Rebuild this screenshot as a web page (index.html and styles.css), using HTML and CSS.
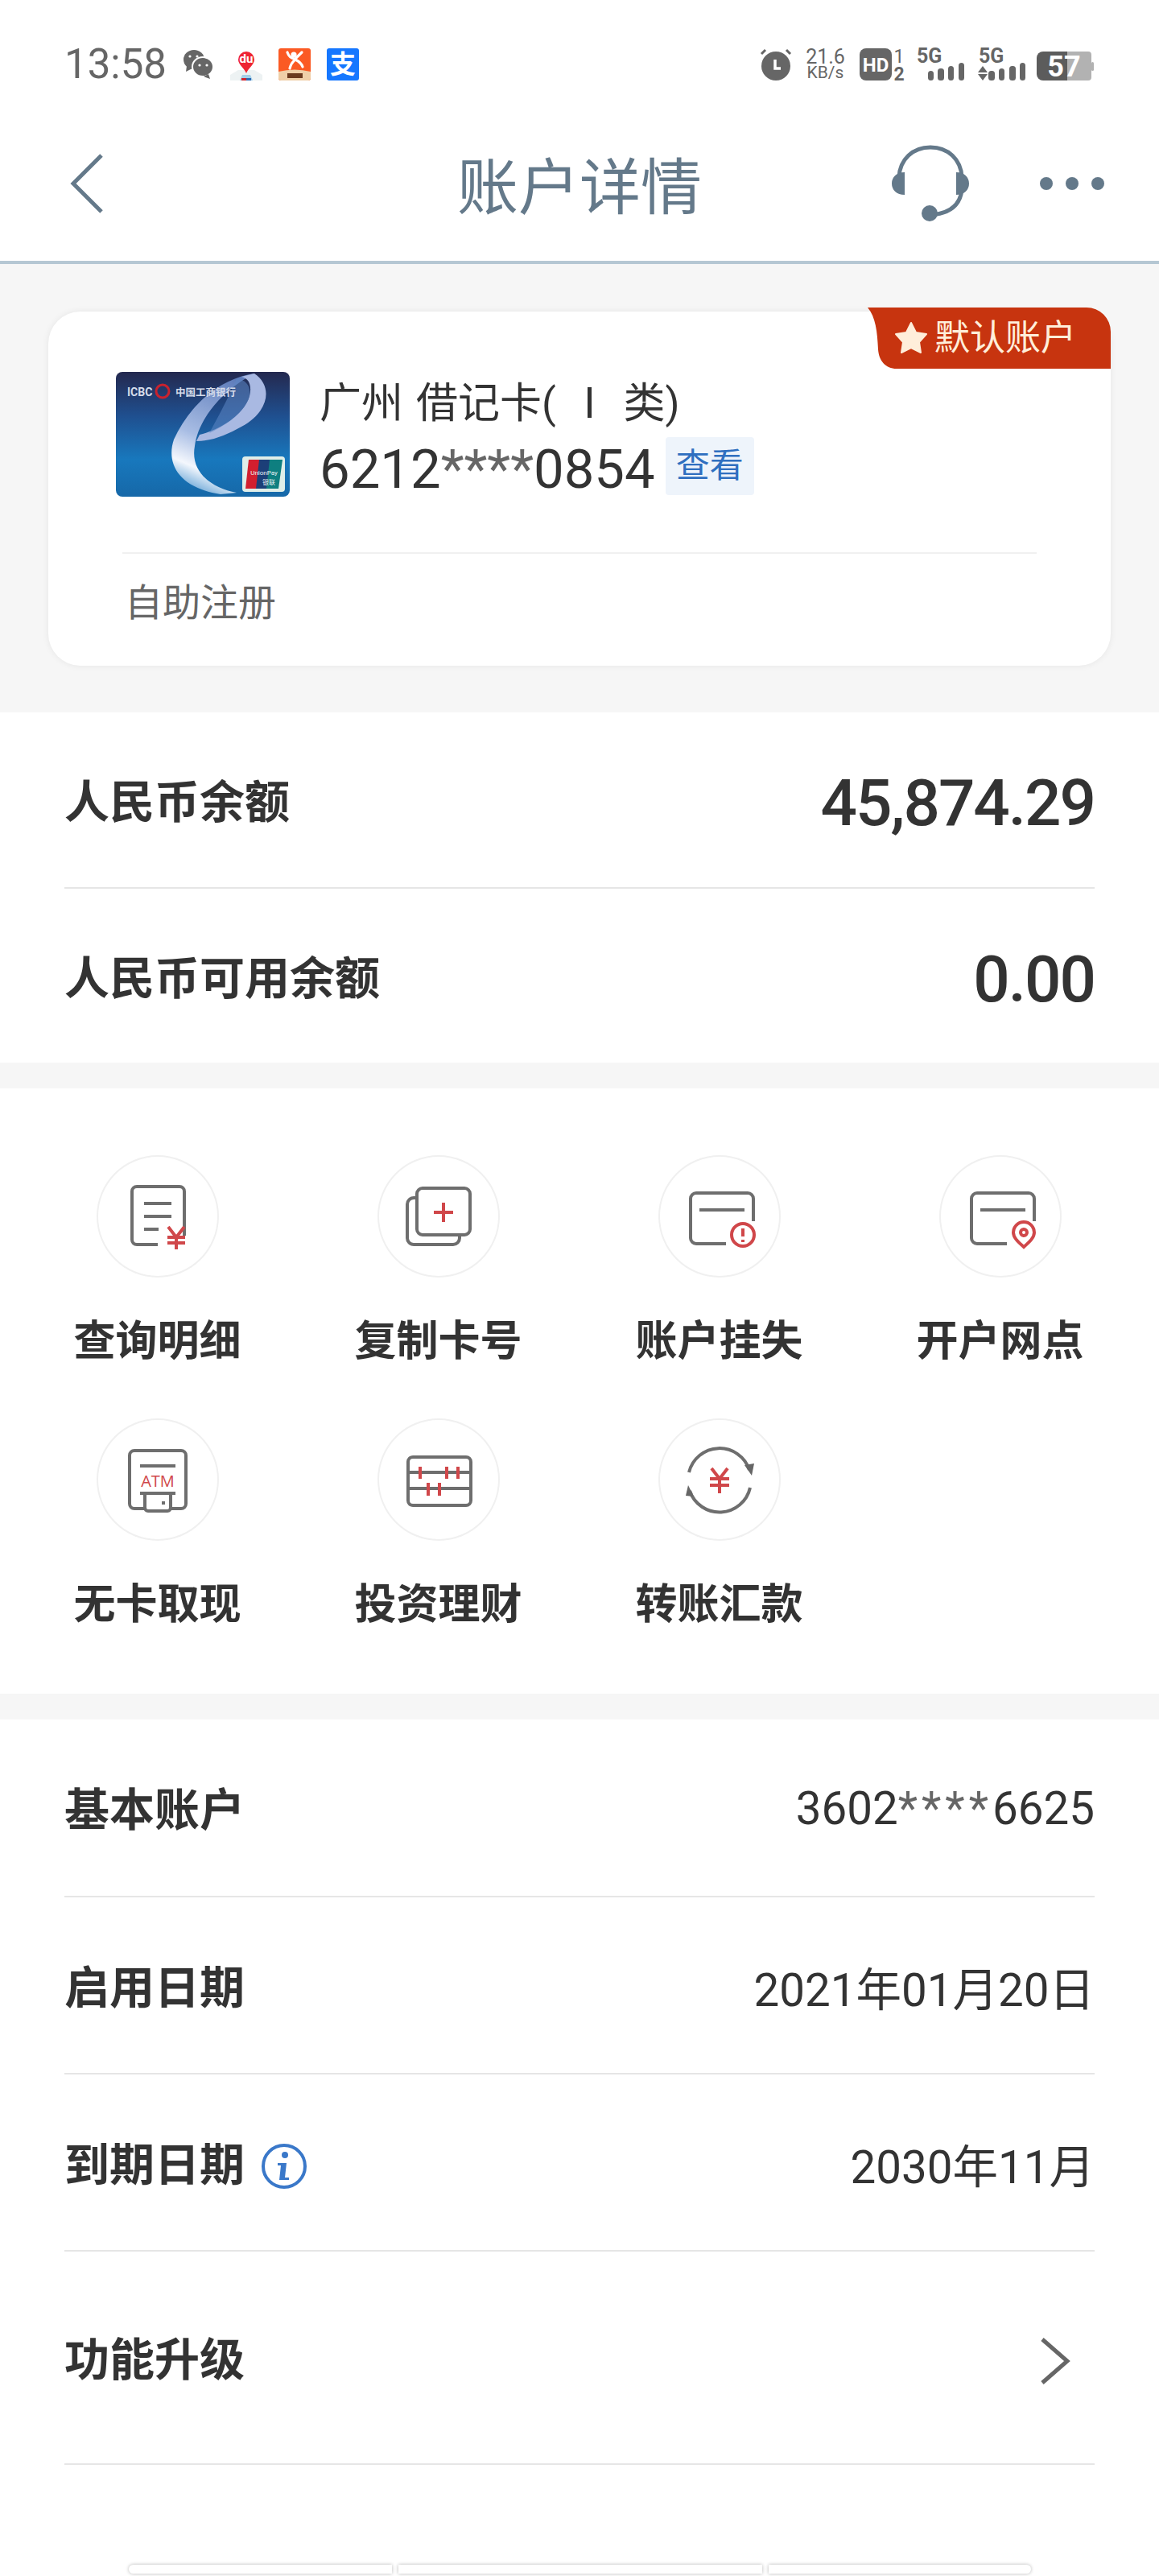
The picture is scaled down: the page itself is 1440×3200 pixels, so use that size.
FILE: index.html
```html
<!DOCTYPE html>
<html lang="zh-CN">
<head>
    <meta charset="UTF-8">
    <meta name="viewport" content="width=device-width, initial-scale=1.0">
    <title>账户详情</title>
    <link rel="stylesheet" href="styles.css">
</head>
<body>
    <!-- Status bar -->
    <div class="status-bar">
        <div class="status-left">
            <span class="clock">13:58</span>
            <svg class="st-wechat" width="38" height="40" viewBox="0 0 38 40">
                <ellipse cx="14" cy="14" rx="13" ry="12" fill="#666"/>
                <path d="M5 22l-1 7 8-4z" fill="#666"/>
                <ellipse cx="25" cy="23" rx="13" ry="12" fill="#666" stroke="#fff" stroke-width="2"/>
                <path d="M32 32l2 6-8-3z" fill="#666"/>
                <circle cx="9" cy="10" r="1.6" fill="#fff"/><circle cx="18" cy="10" r="1.6" fill="#fff"/>
                <circle cx="21" cy="21" r="1.6" fill="#fff"/><circle cx="30" cy="21" r="1.6" fill="#fff"/>
            </svg>
            <svg class="st-map" width="40" height="40" viewBox="0 0 40 40">
                <path d="M0 33l10-6h20l10 6v7H0z" fill="#edf2f3"/>
                <path d="M15 33h10l3 7H12z" fill="#a4cfe8"/>
                <rect x="14" y="37" width="6" height="3" fill="#d0232c"/>
                <rect x="20" y="37" width="6" height="3" fill="#2d6bb5"/>
                <path d="M20 31C17 24 10 20 10 14a10 10 0 0 1 20 0c0 6-7 10-10 17z" fill="#ee2433"/>
                <text x="20" y="18" class="st-du">du</text>
            </svg>
            <svg class="st-app" width="40" height="40" viewBox="0 0 40 40">
                <rect width="40" height="40" rx="3" fill="#fb5a24"/>
                <path d="M0 29q20-5 40 0v8a3 3 0 0 1-3 3H3a3 3 0 0 1-3-3z" fill="#efcfa8"/>
                <circle cx="19" cy="8" r="3.6" fill="#fff"/>
                <path d="M11 5c2 6 6 8 10 8l8-8M21 14c-4 3-6 7-7 11M21 14c4 2 8 6 9 9" fill="none" stroke="#fff" stroke-width="3.2" stroke-linecap="round"/>
                <rect x="11" y="31" width="19" height="6" fill="#6b3a1f"/>
            </svg>
            <svg class="st-app" width="40" height="40" viewBox="0 0 40 40">
                <rect width="40" height="40" rx="3" fill="#1677ff"/>
                <text x="20" y="31" class="st-zhi">支</text>
            </svg>
        </div>
        <div class="status-right">
            <svg width="40" height="40" viewBox="0 0 40 40">
                <circle cx="19" cy="22" r="18" fill="#666"/>
                <path d="M1 7l5-5M37 7l-5-5" stroke="#666" stroke-width="3"/>
                <path d="M18 14v11h7" fill="none" stroke="#fff" stroke-width="3.5"/>
            </svg>
            <div class="net-speed"><span class="speed-num">21.6</span><span class="speed-unit">KB/s</span></div>
            <svg class="st-hd" width="58" height="40" viewBox="0 0 58 40">
                <rect width="40" height="40" rx="8" fill="#666"/>
                <text x="20" y="29" class="st-hd-text">HD</text>
                <text x="49" y="18" class="st-sim">1</text>
                <text x="49" y="40" class="st-sim st-sim-b">2</text>
            </svg>
            <svg class="st-sig" width="60" height="40" viewBox="0 0 60 40">
                <text x="0" y="18" class="st-5g">5G</text>
                <rect x="14" y="28" width="7" height="12" rx="3.5" fill="#666"/>
                <rect x="26" y="25" width="8" height="15" rx="3.5" fill="#666"/>
                <rect x="39" y="22" width="7" height="18" rx="3.5" fill="#666"/>
                <rect x="52" y="18" width="7" height="22" rx="3.5" fill="#666"/>
            </svg>
            <svg class="st-sig" width="60" height="40" viewBox="0 0 60 40">
                <text x="1" y="18" class="st-5g">5G</text>
                <path d="M6 22l6 8H0zM6 40l-6-8h12z" fill="#666"/>
                <rect x="13" y="28" width="8" height="12" rx="3.5" fill="#666"/>
                <rect x="26" y="25" width="7" height="15" rx="3.5" fill="#666"/>
                <rect x="39" y="22" width="8" height="18" rx="3.5" fill="#666"/>
                <rect x="52" y="18" width="7" height="22" rx="3.5" fill="#666"/>
            </svg>
            <svg class="st-batt" width="72" height="40" viewBox="0 0 72 40">
                <path d="M38 4h26a4 4 0 0 1 4 4v28a4 4 0 0 1-4 4H38z" fill="#b2b2b2"/>
                <path d="M38 4H8a8 8 0 0 0-8 8v20a8 8 0 0 0 8 8h30z" fill="#5c5c5c"/>
                <rect x="68" y="17" width="3" height="11" rx="1.5" fill="#b2b2b2"/>
                <text x="34" y="35" class="st-batt-text">57</text>
            </svg>
        </div>
    </div>

    <!-- Nav header -->
    <div class="nav-bar">
        <div class="nav-left">
            <svg width="42" height="76" viewBox="0 0 42 76"><path d="M39 3L4 38l35 35" fill="none" stroke="#64798a" stroke-width="5"/></svg>
        </div>
        <div class="nav-title">账户详情</div>
        <div class="nav-right">
            <svg width="96" height="96" viewBox="0 0 96 96">
                <path d="M9 40C10 18 26 3 48 3s38 15 39 37v16c-2 18-14 29-38 31" fill="none" stroke="#64798a" stroke-width="5"/>
                <path d="M16 34v28C6 62 0 56 0 48s6-14 16-14zM80 34v28c10 0 16-6 16-14s-6-14-16-14z" fill="#64798a"/>
                <circle cx="47" cy="85" r="10" fill="#64798a"/>
            </svg>
            <div class="nav-dots"><i></i><i></i><i></i></div>
        </div>
    </div>

    <!-- Card -->
    <div class="card-wrap">
        <div class="card">
            <div class="badge">
                <svg class="badge-bg" width="302" height="76" viewBox="0 0 302 76">
                    <path d="M0 0H272a30 30 0 0 1 30 30V76H36C22 76 14 66 13 52 12 30 10 12 0 0z" fill="#c7340f"/>
                </svg>
                <svg class="badge-star" width="40" height="40" viewBox="0 0 40 40">
                    <path d="M20 1l6 12 13 2-9 10 2 13-12-6-12 6 2-13L1 15l13-2z" fill="#ffeeda" stroke="#ffeeda" stroke-width="2" stroke-linejoin="round"/>
                </svg>
                <span class="badge-text">默认账户</span>
            </div>
            <div class="card-main">
                <svg class="card-pic" width="216" height="155" viewBox="0 0 216 155">
                    <defs>
                        <linearGradient id="cardBg" x1="0" y1="0" x2="0" y2="1">
                            <stop offset="0" stop-color="#24294f"/>
                            <stop offset="0.35" stop-color="#1f4f8f"/>
                            <stop offset="0.7" stop-color="#1878bd"/>
                            <stop offset="1" stop-color="#1668a8"/>
                        </linearGradient>
                        <linearGradient id="swirl" x1="0.6" y1="0" x2="0.3" y2="1">
                            <stop offset="0" stop-color="#5f7dbb"/>
                            <stop offset="0.55" stop-color="#a8bde4"/>
                            <stop offset="0.8" stop-color="#f4f7fd"/>
                            <stop offset="1" stop-color="#5fa0d4"/>
                        </linearGradient>
                    </defs>
                    <rect width="216" height="155" rx="8" fill="url(#cardBg)"/>
                    <path d="M172 2C130 8 92 40 72 84c-10 30 6 60 58 68l20-2C118 144 92 124 98 92 102 60 130 24 172 2z" fill="url(#swirl)"/>
                    <path d="M172 2c24 16 18 48-16 66-18 10-36 18-56 18l4-8c26-6 56-26 62-48 3-12 0-22-10-24z" fill="#a9b9e2"/>
                    <path d="M150 8c12 2 18 10 16 22-4 18-28 36-50 46 12-22 26-48 34-68z" fill="#5d86c4" opacity="0.55"/>
                    <text x="14" y="30" class="pic-icbc">ICBC</text>
                    <circle cx="58" cy="24" r="8" fill="none" stroke="#c8222e" stroke-width="3"/>
                    <text x="74" y="30" class="pic-bank">中国工商银行</text>
                    <rect x="157" y="105" width="53" height="44" rx="4" fill="#dfeee9"/>
                    <path d="M165 109h16l-5 36h-15z" fill="#d21f2f"/>
                    <path d="M178 109h16l-5 36h-15z" fill="#1c3f78"/>
                    <path d="M191 109h16l-5 36h-15z" fill="#0e7f80"/>
                    <text x="184" y="128" class="pic-up">UnionPay</text>
                    <text x="190" y="140" class="pic-up">银联</text>
                </svg>
                <div class="card-info">
                    <div class="card-name">广州 借记卡( Ⅰ 类)</div>
                    <div class="card-num-line">
                        <span class="card-num">6212<span class="stars">****</span>0854</span>
                        <span class="view-tag">查看</span>
                    </div>
                </div>
            </div>
            <div class="card-foot">自助注册</div>
        </div>
    </div>

    <!-- Balances -->
    <div class="section balance">
        <div class="bal-row bal-line">
            <span class="row-label">人民币余额</span>
            <span class="amount">45,874.29</span>
        </div>
        <div class="bal-row">
            <span class="row-label">人民币可用余额</span>
            <span class="amount">0.00</span>
        </div>
    </div>

    <!-- Operations -->
    <div class="section ops">
        <div class="op">
            <div class="op-icon">
                <svg width="152" height="152" viewBox="0 0 152 152">
                    <path class="ln" d="M76 111H50a6 6 0 0 1-6-6V45a6 6 0 0 1 6-6h53a6 6 0 0 1 6 6v55"/>
                    <path class="ln" d="M59 60h34M59 76h34M59 92h18"/>
                    <path class="rd" d="M89 89l10 13 10-13M88 102h22M88 109h22M99 102v15"/>
                </svg>
            </div>
            <div class="op-label">查询明细</div>
        </div>
        <div class="op">
            <div class="op-icon">
                <svg width="152" height="152" viewBox="0 0 152 152">
                    <path class="ln" d="M49 53h-4a8 8 0 0 0-8 8v42a8 8 0 0 0 8 8h49a8 8 0 0 0 8-8v-4"/>
                    <rect class="ln" x="49" y="41" width="66" height="58" rx="7"/>
                    <path class="rd" d="M70 71h24M82 59v24"/>
                </svg>
            </div>
            <div class="op-label">复制卡号</div>
        </div>
        <div class="op">
            <div class="op-icon">
                <svg width="152" height="152" viewBox="0 0 152 152">
                    <path class="ln" d="M84 110H47a7 7 0 0 1-7-7V54a7 7 0 0 1 7-7h64a7 7 0 0 1 7 7v28"/>
                    <path class="ln" d="M51 68h56"/>
                    <circle class="rd" cx="105" cy="99" r="14"/>
                    <path class="rd" d="M105 91v10M105 105v3"/>
                </svg>
            </div>
            <div class="op-label">账户挂失</div>
        </div>
        <div class="op">
            <div class="op-icon">
                <svg width="152" height="152" viewBox="0 0 152 152">
                    <path class="ln" d="M84 110H47a7 7 0 0 1-7-7V54a7 7 0 0 1 7-7h64a7 7 0 0 1 7 7v28"/>
                    <path class="ln" d="M51 68h56"/>
                    <path class="rd" d="M105 114c-8-7-13-12-13-18a13 13 0 0 1 26 0c0 6-5 11-13 18z"/>
                    <circle class="rd" cx="105" cy="96" r="4"/>
                </svg>
            </div>
            <div class="op-label">开户网点</div>
        </div>
        <div class="op">
            <div class="op-icon">
                <svg width="152" height="152" viewBox="0 0 152 152">
                    <path class="ln" d="M60 112H47a6 6 0 0 1-6-6V46a6 6 0 0 1 6-6h58a6 6 0 0 1 6 6v60a6 6 0 0 1-6 6H92"/>
                    <path class="ln" d="M54 59h44M54 93h44"/>
                    <path class="ln" d="M60 93v18a4 4 0 0 0 4 4h24a4 4 0 0 0 4-4V93"/>
                    <path class="ln" d="M83 103v4"/>
                    <text x="76" y="85" class="atm">ATM</text>
                </svg>
            </div>
            <div class="op-label">无卡取现</div>
        </div>
        <div class="op">
            <div class="op-icon">
                <svg width="152" height="152" viewBox="0 0 152 152">
                    <rect class="ln" x="38" y="48" width="78" height="60" rx="6"/>
                    <path class="ln" d="M38 67h78M38 87h78"/>
                    <path class="rd" d="M53 60v15M86 60v15M100 60v15M63 80v16M77 80v16"/>
                </svg>
            </div>
            <div class="op-label">投资理财</div>
        </div>
        <div class="op">
            <div class="op-icon">
                <svg width="152" height="152" viewBox="0 0 152 152">
                    <path class="ln" d="M38 67A39 39 0 0 1 113 64"/>
                    <path class="ln" d="M114 86A39 39 0 0 1 39 90"/>
                    <path d="M107 58l12-2-3 15z" fill="#666"/>
                    <path d="M37 83l7 14-10-1z" fill="#666"/>
                    <path class="rd" d="M66 62l10 13 10-13M64 75h24M64 83h24M76 75v18"/>
                </svg>
            </div>
            <div class="op-label">转账汇款</div>
        </div>
    </div>

    <!-- Account info -->
    <div class="section details">
        <div class="info-row first-row">
            <span class="row-label">基本账户</span>
            <span class="row-value">3602<span class="stars wide">****</span>6625</span>
        </div>
        <div class="info-row">
            <span class="row-label">启用日期</span>
            <span class="row-value">2021年01月20日</span>
        </div>
        <div class="info-row">
            <span class="row-label with-icon">到期日期
                <svg class="info-icon" width="58" height="58" viewBox="0 0 58 58">
                    <circle cx="29" cy="29" r="26" fill="none" stroke="#3a78c9" stroke-width="4"/>
                    <circle cx="30" cy="15" r="4" fill="#3a78c9"/>
                    <path d="M21 25h11l-2 18h5v3H23l2-18h-4z" fill="#3a78c9"/>
                </svg>
            </span>
            <span class="row-value">2030年11月</span>
        </div>
        <div class="info-row upgrade">
            <span class="row-label">功能升级</span>
            <svg class="chevron" width="38" height="58" viewBox="0 0 38 58"><path d="M3 2l31 27L3 56" fill="none" stroke="#666" stroke-width="5"/></svg>
        </div>
    </div>

    <!-- Bottom buttons, only the top edge is on screen -->
    <div class="bottom-btns">
        <div class="bottom-btn first"></div>
        <div class="bottom-btn mid"></div>
        <div class="bottom-btn last"></div>
    </div>
</body>
</html>
```
FILE: styles.css
```css
body {
    margin: 0;
    width: 1440px;
    height: 3200px;
    overflow: hidden;
    background-color: #f6f6f6;
    font-family: Roboto, "Noto Sans CJK SC", sans-serif;
    color: #333;
}
svg {
    display: block;
    flex: none;
    overflow: visible;
}

/* status bar */
.status-bar {
    height: 132px;
    box-sizing: border-box;
    padding: 60px 80px 0;
    display: flex;
    justify-content: space-between;
    align-items: flex-start;
    background-color: #fff;
}
.status-left, .status-right {
    display: flex;
    align-items: center;
    height: 40px;
}
.clock {
    font-size: 51px;
    line-height: 40px;
    color: #666;
    width: 123px;
    margin-right: 24px;
    white-space: nowrap;
}
.st-wechat { margin-right: 21px; }
.st-map { margin-right: 20px; }
.st-app { margin-right: 20px; }
.st-app:last-child { margin-right: 0; }
.st-du {
    font-size: 15px;
    font-weight: 700;
    fill: #fff;
    text-anchor: middle;
}
.st-zhi {
    font-size: 32px;
    font-weight: 700;
    fill: #fff;
    text-anchor: middle;
}
.net-speed {
    display: flex;
    flex-direction: column;
    align-items: center;
    width: 49px;
    margin: 0 18px 0 16px;
    color: #666;
}
.speed-num {
    font-size: 25px;
    line-height: 21px;
}
.speed-unit {
    font-size: 21px;
    line-height: 19px;
}
.st-hd { margin-right: 13px; }
.st-hd-text {
    font-size: 24px;
    font-weight: 700;
    fill: #fff;
    text-anchor: middle;
}
.st-sim {
    font-size: 23px;
    fill: #666;
    text-anchor: middle;
}
.st-sim-b { font-weight: 700; }
.st-sig { margin-right: 16px; }
.st-sig + .st-batt { margin-left: -3px; }
.st-5g {
    font-size: 25px;
    font-weight: 700;
    fill: #666;
}
.st-batt-text {
    font-size: 36px;
    font-weight: 700;
    fill: #fff;
    text-anchor: middle;
}

/* nav */
.nav-bar {
    height: 192px;
    display: grid;
    grid-template-columns: 1fr auto 1fr;
    align-items: center;
    background-color: #fff;
    border-bottom: 4px solid #b5c7d3;
}
.nav-left {
    padding-left: 87px;
}
.nav-title {
    margin-top: 12px;
    font-size: 76px;
    line-height: 90px;
    color: #64798a;
}
.nav-right {
    display: flex;
    justify-content: flex-end;
    align-items: center;
    gap: 88px;
    padding-right: 68px;
}
.nav-dots {
    display: flex;
    gap: 16px;
}
.nav-dots i {
    display: block;
    width: 16px;
    height: 16px;
    border-radius: 50%;
    background-color: #64798a;
}

/* card */
.card-wrap {
    padding: 59px 60px 58px;
}
.card {
    position: relative;
    height: 440px;
    box-sizing: border-box;
    padding: 75px 92px 0 84px;
    background: #fff;
    border-radius: 40px;
    box-shadow: 0 0 8px rgba(0, 0, 0, 0.07);
}
.badge {
    position: absolute;
    top: -5px;
    right: 0;
    width: 302px;
    height: 76px;
    display: flex;
    align-items: center;
    padding-left: 34px;
    box-sizing: border-box;
}
.badge-bg {
    position: absolute;
    top: 0;
    left: 0;
}
.badge-star {
    position: relative;
    margin-right: 9px;
}
.badge-text {
    position: relative;
    font-size: 44px;
    line-height: 76px;
    color: #ffeeda;
}
.card-main {
    display: flex;
    gap: 37px;
    height: 149px;
}
.card-pic { height: 155px; }
.pic-icbc {
    font-size: 14px;
    font-weight: 700;
    fill: #d5dcea;
}
.pic-bank {
    font-size: 12.5px;
    font-weight: 700;
    fill: #d5dcea;
}
.pic-up {
    font-size: 8px;
    fill: #e9f2f5;
    text-anchor: middle;
}
.card-info {
    padding-top: 7px;
}
.card-name {
    font-size: 52px;
    line-height: 66px;
    word-spacing: 3px;
    white-space: nowrap;
}
.card-num-line {
    display: flex;
    align-items: center;
    gap: 13px;
    margin-top: 8px;
    height: 72px;
}
.card-num {
    font-size: 67px;
    line-height: 72px;
    padding-top: 8px;
}
.stars { color: #666; }
.wide { letter-spacing: 5px; }
.view-tag {
    width: 110px;
    height: 72px;
    line-height: 72px;
    text-align: center;
    font-size: 42px;
    color: #2f6fc0;
    background-color: #eef4fb;
    border-radius: 4px;
}
.card-foot {
    margin: 75px 0 0 8px;
    padding-left: 3px;
    border-top: 2px solid #f0f0f0;
    font-size: 47px;
    line-height: 122px;
    color: #666;
}

/* sections */
.section {
    background-color: #fff;
}
.row-label {
    font-size: 56px;
    font-weight: 700;
    color: #333;
    padding-bottom: 4px;
}
.balance {
    padding: 0 80px;
    height: 435px;
}
.bal-row {
    height: 217px;
    display: flex;
    justify-content: space-between;
    align-items: center;
}
.bal-line {
    border-bottom: 2px solid #e6e6e6;
}
.amount {
    font-size: 80px;
    letter-spacing: -2px;
    font-weight: 500;
    color: #333;
    padding-top: 8px;
}

/* function grid */
.ops {
    margin-top: 32px;
    height: 752px;
    box-sizing: border-box;
    padding: 83px 21px 0;
    display: grid;
    grid-template-columns: repeat(4, 349px);
    grid-auto-rows: 327px;
}
.op {
    display: flex;
    flex-direction: column;
    align-items: center;
}
.op-icon {
    width: 152px;
    height: 152px;
    border-radius: 50%;
    box-shadow: inset 0 0 0 2px #f0f0f0;
}
.op-label {
    margin-top: 54px;
    font-size: 52px;
    line-height: 52px;
    font-weight: 700;
    color: #333;
}
.ln {
    fill: none;
    stroke: #6e6e6e;
    stroke-width: 4;
}
.rd {
    fill: none;
    stroke: #d0474a;
    stroke-width: 4;
}
.atm {
    font-size: 20px;
    font-family: "Open Sans", sans-serif;
    fill: #d0474a;
    text-anchor: middle;
}

/* details */
.details {
    margin-top: 32px;
    padding: 0 80px;
}
.info-row {
    height: 220px;
    display: flex;
    justify-content: space-between;
    align-items: center;
    border-bottom: 2px solid #e6e6e6;
    box-sizing: border-box;
}
.first-row { height: 221px; }
.row-value {
    font-size: 56.5px;
    color: #333;
    padding-top: 2px;
}
.with-icon {
    display: flex;
    align-items: center;
    gap: 20px;
}
.info-icon {
    margin-top: 14px;
}
.upgrade {
    height: 265px;
    padding-right: 30px;
}
.chevron {
    margin-top: 8px;
}

/* bottom buttons */
.bottom-btns {
    display: flex;
    justify-content: center;
    gap: 8px;
    height: 140px;
    box-sizing: border-box;
    padding-top: 124px;
    background-color: #fff;
}
.bottom-btn {
    height: 11px;
    background-color: #fff;
    box-shadow: 0 0 4px rgba(0, 0, 0, 0.3);
}
.first { width: 327px; border-radius: 6px 0 0 6px; }
.mid { width: 452px; }
.last { width: 326px; border-radius: 0 6px 6px 0; }
```
